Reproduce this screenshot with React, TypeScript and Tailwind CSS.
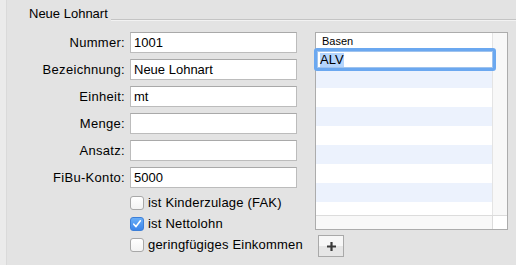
import React from 'react';

const font = { fontFamily: '"Liberation Sans", Arial, sans-serif' };

const fields: { label: string; value: string }[] = [
  { label: 'Nummer:', value: '1001' },
  { label: 'Bezeichnung:', value: 'Neue Lohnart' },
  { label: 'Einheit:', value: 'mt' },
  { label: 'Menge:', value: '' },
  { label: 'Ansatz:', value: '' },
  { label: 'FiBu-Konto:', value: '5000' },
];

const checks: { label: string; checked: boolean }[] = [
  { label: 'ist Kinderzulage (FAK)', checked: false },
  { label: 'ist Nettolohn', checked: true },
  { label: 'geringfügiges Einkommen', checked: false },
];

const Checkbox: React.FC<{ checked: boolean }> = ({ checked }) =>
  checked ? (
    <div className="w-[14px] h-[14px] shrink-0 rounded-[3px] bg-gradient-to-b from-[#6aaef7] to-[#3b84ea] border border-[#3d7fd8] flex items-center justify-center">
      <svg width="10" height="10" viewBox="0 0 10 10">
        <path d="M1.8 5.2 L4 7.6 L8.4 1.8" fill="none" stroke="white" strokeWidth="1.6" strokeLinecap="round" strokeLinejoin="round" />
      </svg>
    </div>
  ) : (
    <div className="w-[14px] h-[14px] shrink-0 rounded-[3px] bg-gradient-to-b from-white to-[#f3f3f3] border border-[#a8a8a8]" />
  );

export default function App() {
  // striped rows below the edited one
  const rows = [true, false, true, false, true, false, true];

  return (
    <div className="w-[516px] h-[265px] bg-[#e3e3e3] flex overflow-hidden text-black" style={font}>
      <div className="w-[7px] h-full bg-[#ebebeb] border-r border-[#dadada]" />

      <div className="flex-1 flex flex-col">
        {/* group title */}
        <div className="flex items-start mt-[6px]">
          <span className="ml-[22px] text-[13px] leading-[16px]">Neue Lohnart</span>
          <div className="flex-1 ml-[3px] mt-[13px] border-t border-[#c4c4c4] border-b border-b-[#f2f2f2]" />
        </div>

        <div className="flex mt-[10px]">
          {/* form */}
          <div className="w-[290px] shrink-0 flex flex-col">
            <div className="grid grid-cols-[118px_167px] gap-x-[5px] gap-y-[6px]">
              {fields.map(f => (
                <React.Fragment key={f.label}>
                  <div className="text-right text-[13px] leading-[21px] tracking-[0.3px]">{f.label}</div>
                  <div className="h-[21px] bg-white border border-[#bcbcbc] border-t-[#a9a9a9] px-[3px] text-[13px] leading-[19px]">
                    {f.value}
                  </div>
                </React.Fragment>
              ))}
            </div>
            <div className="ml-[123px] mt-[4px] flex flex-col">
              {checks.map(c => (
                <div key={c.label} className="h-[21px] flex items-center gap-[4px] whitespace-nowrap">
                  <Checkbox checked={c.checked} />
                  <span className="text-[13px] tracking-[0.2px]">{c.label}</span>
                </div>
              ))}
            </div>
          </div>

          {/* table */}
          <div className="ml-[18px] flex flex-col">
            <div className="w-[193px] h-[198px] border border-[#acacac] bg-white flex flex-col">
              <div className="flex flex-1 min-h-0">
                <div className="flex-1 flex flex-col">
                  <div className="h-[17px] shrink-0 pl-[6px] text-[11px] leading-[17px]">Basen</div>
                  <div className="relative h-[19px] shrink-0">
                    <div className="absolute left-[-2px] right-[-4px] top-[-2px] h-[23px] rounded-[3px] border-[3px] border-[#6ba8f0] bg-white z-10">
                      <div className="h-full border border-[#9fc3ee] flex items-center pl-[2px]">
                        <span className="text-[13px] leading-[14px] bg-[#b4d5fd]">ALV</span>
                      </div>
                    </div>
                  </div>
                  {rows.map((s, i) => (
                    <div key={i} className={s ? 'h-[19px] shrink-0 bg-[#ecf2fd]' : 'h-[19px] shrink-0 bg-white'} />
                  ))}
                  <div className="flex-1 bg-white" />
                </div>
                <div className="w-[15px] bg-[#f8f8f8] border-l border-[#e4e4e4]" />
              </div>
              <div className="h-[14px] shrink-0 flex border-t border-[#dcdcdc]">
                <div className="flex-1 bg-[#f8f8f8]" />
                <div className="w-[15px] bg-white border-l border-[#dcdcdc]" />
              </div>
            </div>
            <button className="mt-[5px] ml-[3px] w-[26px] h-[22px] border border-[#a9a9a9] flex flex-col overflow-hidden relative">
              <div className="h-1/2 w-full bg-[#f7f7f7]" />
              <div className="h-1/2 w-full bg-[#e6e6e6]" />
              <svg className="absolute left-[7px] top-[5px]" width="11" height="11" viewBox="0 0 11 11">
                <path d="M5.5 1 V10 M1 5.5 H10" stroke="#3a3a3a" strokeWidth="2.2" />
              </svg>
            </button>
          </div>
        </div>
      </div>
    </div>
  );
}
